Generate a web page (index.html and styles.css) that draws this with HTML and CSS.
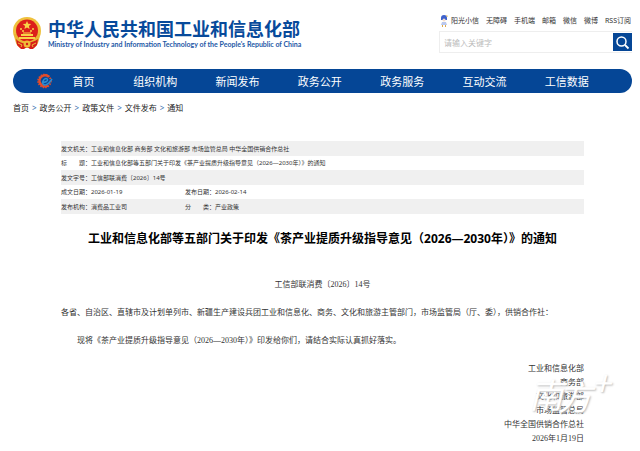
FILE: index.html
```html
<!DOCTYPE html>
<html lang="zh-CN">
<head>
<meta charset="utf-8">
<meta name="viewport" content="width=device-width, initial-scale=1">
<title>中华人民共和国工业和信息化部</title>
<link rel="stylesheet" href="styles.css">
</head>
<body>
<div class="page">
  <header class="header">
    <div class="brand">
      <svg class="emblem" viewBox="0 0 28 33" aria-hidden="true">
        <circle cx="14" cy="14" r="14" fill="#efc13d"/>
        <path d="M1 17 Q2 28 7 31 L21 31 Q26 28 27 17Z" fill="#e9b634"/>
        <circle cx="14" cy="13.500" r="11" fill="#dc1f1b"/>
        <path d="M14 4l1.200 2.800 3 .200-2.300 2 .700 3-2.600-1.600-2.600 1.600.700-3-2.300-2 3-.200z" fill="#f8d348"/>
        <g fill="#f8d348"><circle cx="8" cy="12" r="1"/><circle cx="10" cy="14" r="1"/><circle cx="18" cy="14" r="1"/><circle cx="20" cy="12" r="1"/>
        <path d="M8 17h12v2H8zM6 20h16v2H6zM10 15.500h8v1h-8z"/></g>
        <path d="M3 22q4 5 11 4t11-4l-1 6-4 4h-3l-3-2-3 2H8l-4-4z" fill="#d61e19"/>
        <circle cx="14" cy="27" r="3.500" fill="#efbb38"/>
        <circle cx="14" cy="27" r="1.200" fill="#d61e19"/>
        <path d="M5 26l4 2-1 2M23 26l-4 2 1 2" fill="none" stroke="#efbb38"/>
      </svg>
      <div>
        <h1 class="brand-name">中华人民共和国工业和信息化部</h1>
        <p class="brand-en">Ministry of Industry and Information Technology of the People's Republic of China</p>
      </div>
    </div>
    <div class="tools">
      <nav class="quick">
        <svg class="mascot" viewBox="0 0 8 12" aria-hidden="true">
          <path d="M1 3Q1 0 4 0t3 3v2H1z" fill="#3f62cc"/>
          <path d="M6 0l2 1-1 1z" fill="#e8b73c"/>
          <circle cx="4" cy="5" r="1.500" fill="#f5ddca"/>
          <path d="M2 7h4l1 3H1z" fill="#bac8ee"/>
          <path d="M2 10h1v2H2zM5 10h1v2H5z" fill="#e0a94a"/>
        </svg>
        <a href="#">阳光小信</a><a href="#">无障碍</a><a href="#">手机端</a><a href="#">邮箱</a><a href="#">微信</a><a href="#">微博</a><a href="#">RSS订阅</a>
      </nav>
      <form class="search">
        <input type="text" aria-label="搜索" placeholder="请输入关键字">
        <button type="button" aria-label="搜索">
          <svg viewBox="0 0 19 19" aria-hidden="true"><circle cx="8.500" cy="8.500" r="4.500" fill="none" stroke="#fff" stroke-width="1.500"/><path d="M12 12l3.500 3.500" stroke="#fff" stroke-width="1.800"/></svg>
        </button>
      </form>
    </div>
  </header>

  <nav class="main-nav">
    <svg class="gear" viewBox="0 0 16 16" aria-hidden="true">
      <circle cx="7.500" cy="8" r="6.300" fill="none" stroke="#dc4a2c" stroke-width="2" stroke-dasharray="1.500 1.100" pathLength="40"/>
      <path d="M12 4A5.500 5.500 0 1 0 11 12.500" fill="none" stroke="#e34c2a" stroke-width="2.500"/>
      <path d="M5.500 9.500Q11 9 10.500 6.500 9.500 4.500 7 6.500 4.500 9.500 6.500 11.500 10 13.500 15 6" fill="none" stroke="#2b8bd0" stroke-width="1.500"/>
    </svg>
    <a class="home" href="#">首页</a>
    <a href="#">组织机构</a><a href="#">新闻发布</a><a href="#">政务公开</a><a href="#">政务服务</a><a href="#">互动交流</a><a href="#">工信数据</a>
  </nav>

  <nav class="crumbs">
    <a href="#">首页</a><span>&gt;</span><a href="#">政务公开</a><span>&gt;</span><a href="#">政策文件</a><span>&gt;</span><a href="#">文件发布</a><span>&gt;</span><a href="#">通知</a>
  </nav>

  <main class="article">
    <table class="meta">
      <colgroup><col class="col-label"><col class="col-value"><col class="col-label"><col></colgroup>
      <tr><th>发文机关：</th><td colspan="3">工业和信息化部 商务部 文化和旅游部 市场监管总局 中华全国供销合作总社</td></tr>
      <tr><th>标　　题：</th><td colspan="3">工业和信息化部等五部门关于印发《茶产业提质升级指导意见（2026—2030年）》的通知</td></tr>
      <tr><th>发文字号：</th><td colspan="3">工信部联消费〔2026〕14号</td></tr>
      <tr><th>成文日期：</th><td>2026-01-19</td><th>发布日期：</th><td>2026-02-14</td></tr>
      <tr><th>发布机构：</th><td>消费品工业司</td><th>分　　类：</th><td>产业政策</td></tr>
    </table>
    <h2 class="title">工业和信息化部等五部门关于印发《茶产业提质升级指导意见（2026—2030年）》的通知</h2>
    <p class="number">工信部联消费〔2026〕14号</p>
    <p class="text">各省、自治区、直辖市及计划单列市、新疆生产建设兵团工业和信息化、商务、文化和旅游主管部门，市场监管局（厅、委），供销合作社：</p>
    <p class="text indent">现将《茶产业提质升级指导意见（2026—2030年）》印发给你们，请结合实际认真抓好落实。</p>
    <div class="signature">
      <p>工业和信息化部</p>
      <p>商务部</p>
      <p>文化和旅游部</p>
      <p>市场监管总局</p>
      <p>中华全国供销合作总社</p>
      <p>2026年1月19日</p>
      <div class="watermark"><span class="mark-south">南</span><span class="mark-square">方</span><span class="mark-plus">+</span></div>
    </div>
  </main>
</div>
</body>
</html>
```
FILE: styles.css
```css
* { box-sizing: border-box; }
body {
  margin: 0;
  background: #fff;
  color: #333;
  font-family: "Noto Sans", "Noto Sans CJK SC", sans-serif;
}
h1, h2, p { margin: 0; }
a { color: inherit; text-decoration: none; }
.page { padding: 0 8px 0 13px; }

.header { display: flex; justify-content: space-between; height: 69px; }
.brand { display: flex; gap: 7px; padding-top: 17px; }
.emblem { width: 28px; height: 33px; }
.brand-name {
  color: #074a9b;
  font: bold 18px/22px "Noto Sans CJK SC", sans-serif;
  white-space: nowrap;
}
.brand-en {
  color: #1d58a6;
  font: bold 7px/10px Lato, sans-serif;
  white-space: nowrap;
}
.tools { width: 193px; padding-top: 14px; }
.quick {
  display: flex;
  justify-content: flex-end;
  align-items: center;
  gap: 7px;
  height: 13px;
  margin-bottom: 4px;
  padding-right: 1px;
  font-size: 7px;
  line-height: 12px;
  white-space: nowrap;
}
.mascot { width: 8px; height: 12px; margin-right: -4px; }
.search {
  display: flex;
  height: 22px;
  padding: 1px 0;
  border: 1px solid #eee;
  border-right: 0;
}
.search input {
  flex: 1;
  min-width: 0;
  padding: 0 4px;
  border: 0;
  background: none;
  font: 8px "Noto Sans CJK SC", sans-serif;
}
.search input::placeholder { color: #bbb; }
.search button {
  width: 19px;
  padding: 0;
  border: 0;
  background: #054696;
}
.search svg { display: block; width: 100%; }

.main-nav {
  display: flex;
  align-items: center;
  height: 24px;
  padding: 0 24px;
  border-radius: 12px;
  background: #054696;
  color: #fff;
  font: 11px/24px "Noto Sans CJK SC", sans-serif;
  text-align: center;
}
.main-nav a { flex: 1; }
.main-nav .home { flex: 0 0 61px; }
.gear { width: 16px; height: 16px; }

.crumbs {
  display: flex;
  gap: 3px;
  padding-top: 9px;
  color: #222;
  font-size: 8px;
  line-height: 12px;
}
.crumbs span { color: #3a6fb0; }

.article { padding: 27px 48px 0; }
.meta {
  width: 100%;
  border-collapse: collapse;
  table-layout: fixed;
  font-size: 6px;
  line-height: 12px;
}
.col-label { width: 30px; }
.col-value { width: 94px; }
.meta tr { height: 14px; }
.meta tr:nth-child(odd) { height: 15px; background: #f0f0f0; }
.meta th, .meta td { padding: 0; font-weight: normal; text-align: left; white-space: nowrap; }

.title {
  padding-top: 15px;
  color: #000;
  font-size: 12px;
  line-height: 20px;
  text-align: center;
}
.number, .text, .signature {
  font: 8px/14px "Liberation Serif", "Noto Sans CJK SC", sans-serif;
}
.number { padding: 29px 0 14px; text-align: center; }
.text { margin-bottom: 14px; }
.indent { text-indent: 2em; }
.signature { position: relative; text-align: right; }
.watermark {
  color: #fff;
  font: italic 34px/40px "Noto Sans CJK SC", sans-serif;
  text-shadow: 1px 1px 2px #bbb;
}
.watermark span { position: absolute; }
.mark-south { top: 12px; right: 21px; }
.mark-square { top: 14px; right: -8px; }
.mark-plus { top: 0; right: -26px; }
```
